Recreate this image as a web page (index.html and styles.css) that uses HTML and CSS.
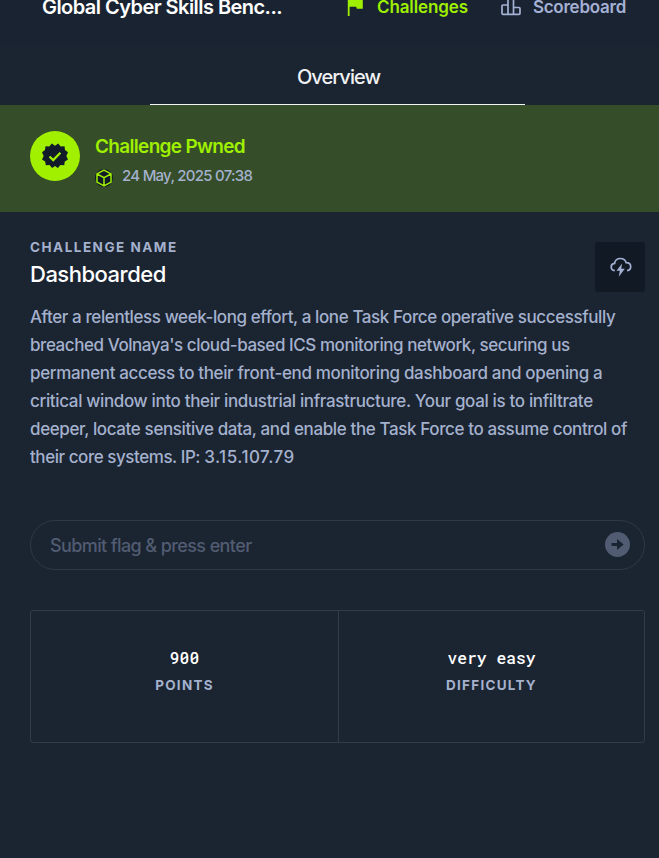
FILE: index.html
```html
<!DOCTYPE html>
<html lang="en">
<head>
<meta charset="utf-8">
<title>Dashboarded</title>
<link rel="stylesheet" href="styles.css">
</head>
<body>
<header class="topbar">
  <div class="event">Global Cyber Skills Benc...</div>
  <nav class="nav">
    <a class="nav-item active"><svg class="flag" width="16" height="20" viewBox="0 0 16 20"><path d="M0.800 1h9l.6 2H15.800v8.800H9.800l-.6-2H2.600V19H.8z" fill="currentColor"/></svg><span class="nav-challenges">Challenges</span></a>
    <a class="nav-item"><svg class="bars" width="20" height="20" viewBox="0 0 20 20" fill="none" stroke="currentColor" stroke-width="1.700" stroke-linejoin="round"><path d="M7 17.300V2.500q0-1 1-1h3.500q1 0 1 1v14.800M7 8H2q-1 0-1 1v7.300q0 1 1 1h16q1 0 1-1V11.500q0-1-1-1h-5.500"/></svg><span class="nav-scoreboard">Scoreboard</span></a>
  </nav>
</header>
<div class="tabs"><div class="tab"><span class="tab-text">Overview</span></div></div>
<section class="pwned">
  <div class="badge"><svg width="26" height="26" viewBox="0 0 26 26"><path d="M13 2.800l3.200-2.300 2.500 3 3.800-.3.500 3.900 3 2.100-1.700 3.800L26 16.500l-3.200 2-.6 3.800-3.800-.2-2.500 2.900L13 23l-2.900 2-2.500-2.900-3.800.2-.6-3.800L0 16.500 1.700 13 0 9.200l3-2.100.5-3.900 3.800.3 2.500-3z" fill="#111b29"/><path d="M7.500 13.500l3.700 3.600 7.200-7.400" fill="none" stroke="#a0f000" stroke-width="2.200"/></svg></div>
  <div>
    <div class="pwned-title"><span>Challenge Pwned</span></div>
    <div class="pwned-date"><svg width="18" height="18" viewBox="0 0 18 18"><circle cx="9" cy="9" r="9" fill="#111b29"/><path d="M9 1.200l7 3.700v8.200l-7 3.800-7-3.800V4.900zM2 5l7 3.700L16 5M9 8.700v8" fill="none" stroke="#a0f000" stroke-width="1.500" stroke-linejoin="round"/></svg><span>24 May, 2025 07:38</span></div>
  </div>
</section>
<main class="content">
  <div class="heading">
    <div>
      <div class="label">CHALLENGE NAME</div>
      <h1 class="title">Dashboarded</h1>
    </div>
    <button class="cloud"><svg width="22" height="20" viewBox="0 0 22 20"><path d="M4.800 13.600C2.500 13.200 1.200 11.800 1.200 9.900 1.200 8 2.600 6.600 4.600 6.400 5 3.400 7.500 1.500 10.500 1.500c2.900 0 5 1.700 5.700 4.200 2.600 0 4.500 1.500 4.500 4 0 2.100-1.300 3.500-3.600 3.900" fill="none" stroke="#a4b1d4" stroke-width="1.700"/><path d="M12 6.500L6.500 13.700h3.300L8.800 19.700l6-7.900h-3.500z" fill="#a4b1d4"/></svg></button>
  </div>
  <p class="desc">
    <span class="line l1">After a relentless week-long effort, a lone Task Force operative successfully</span>
    <span class="line l2">breached Volnaya's cloud-based ICS monitoring network, securing us</span>
    <span class="line l3">permanent access to their front-end monitoring dashboard and opening a</span>
    <span class="line l4">critical window into their industrial infrastructure. Your goal is to infiltrate</span>
    <span class="line l5">deeper, locate sensitive data, and enable the Task Force to assume control of</span>
    <span class="line l6">their core systems. IP: <span class="ip">3.15.107.79</span></span>
  </p>
  <div class="submit"><span>Submit flag &amp; press enter</span><svg width="26" height="26" viewBox="0 0 26 26"><circle cx="12.500" cy="12.500" r="12.500" fill="#515c72"/><path d="M6.500 11.100H12V7L18.700 12.500 12 18v-4.100H6.500z" fill="#1a2332"/></svg></div>
  <div class="stats">
    <div class="stat"><div class="value">900</div><div class="label">POINTS</div></div>
    <div class="stat"><div class="value">very easy</div><div class="label">DIFFICULTY</div></div>
  </div>
</main>
</body>
</html>
```
FILE: styles.css
```css
* { box-sizing: border-box; }
body { margin: 0; height: 858px; overflow: hidden; background: #1b2431; color: #fff; font-family: Inter, "Liberation Sans", sans-serif; font-weight: 500; }
svg { display: block; flex: none; }
.topbar { height: 45px; background: #1a2332; display: flex; align-items: flex-start; padding-left: 42px; white-space: nowrap; }
.event { width: 305px; margin-top: -5px; font-size: 20px; line-height: 24px; letter-spacing: -0.55px; font-weight: 600; }
.nav { display: flex; gap: 33px; margin-top: -5px; }
.nav-item { display: flex; height: 24px; align-items: center; color: #a4b1d4; font-size: 17px; line-height: 24px; }
.active { color: #9fef00; }
.flag { margin-right: 14px; }
.bars { margin-right: 12px; }
.nav-challenges { font-weight: 600; letter-spacing: -0.12px; }
.nav-scoreboard { font-weight: 600; letter-spacing: -0.24px; }
.tabs { height: 60px; display: flex; justify-content: center; padding-left: 16px; }
.tab { width: 375px; padding-left: 2px; border-bottom: 1px solid #f4f4f6; text-align: center; line-height: 64px; font-size: 20px; letter-spacing: -0.95px; color: #f1f2f4; }
.pwned { height: 107px; background: #354d29; padding: 26px 30px; display: flex; gap: 15px; }
.badge { width: 50px; height: 50px; border-radius: 50%; background: #a0f000; display: grid; place-items: center; }
.pwned-title { color: #9fef00; font-size: 19px; line-height: 32px; height: 30px; font-weight: 600; letter-spacing: -0.68px; }
.pwned-date { display: flex; gap: 9px; align-items: center; color: #a4b1cd; font-size: 15px; line-height: 22px; letter-spacing: -0.74px; margin-top: 4px; }
.pwned-date svg { position: relative; top: 2px; }
.content { padding: 30px 14px 0 30px; }
.heading { display: flex; justify-content: space-between; height: 50px; }
.label { color: #a4b1cd; font-size: 13.5px; line-height: 16px; font-weight: 700; letter-spacing: 1.5px; margin-top: -3px; }
.title { margin: 3px 0 0; font-size: 22px; line-height: 32px; font-weight: 500; letter-spacing: -0.5px; }
.cloud { width: 50px; height: 50px; border: 0; border-radius: 3px; background: #111924; display: grid; place-items: center; padding: 0 0 0 2px; }
.desc { margin: 11px 0 0; color: #a4b1cd; font-size: 17px; line-height: 28px; white-space: nowrap; }
.line { display: block; }
.l1 { letter-spacing: -0.405px; }
.l2 { letter-spacing: -0.436px; }
.l3 { letter-spacing: -0.355px; }
.l4 { letter-spacing: -0.35px; }
.l5 { letter-spacing: -0.38px; }
.l6 { letter-spacing: -0.45px; }
.ip { letter-spacing: 0.5px; }
.submit { margin-top: 49px; height: 50px; border: 1px solid #2f3848; border-radius: 25px; padding: 0 13px 0 19px; display: flex; align-items: center; justify-content: space-between; color: #515c72; font-size: 18px; letter-spacing: -0.6px; }
.stats { margin-top: 40px; height: 133px; border: 1px solid #313b4c; border-radius: 3px; display: grid; grid-template-columns: 307px 1fr; }
.stat { text-align: center; padding-top: 35px; }
.stat + .stat { border-left: 1px solid #313b4c; }
.value { font-family: "Roboto Mono", "DejaVu Sans Mono", monospace; font-size: 16.300px; line-height: 24px; }
.stat .label { margin-top: 7px; letter-spacing: 1.25px; }
```
